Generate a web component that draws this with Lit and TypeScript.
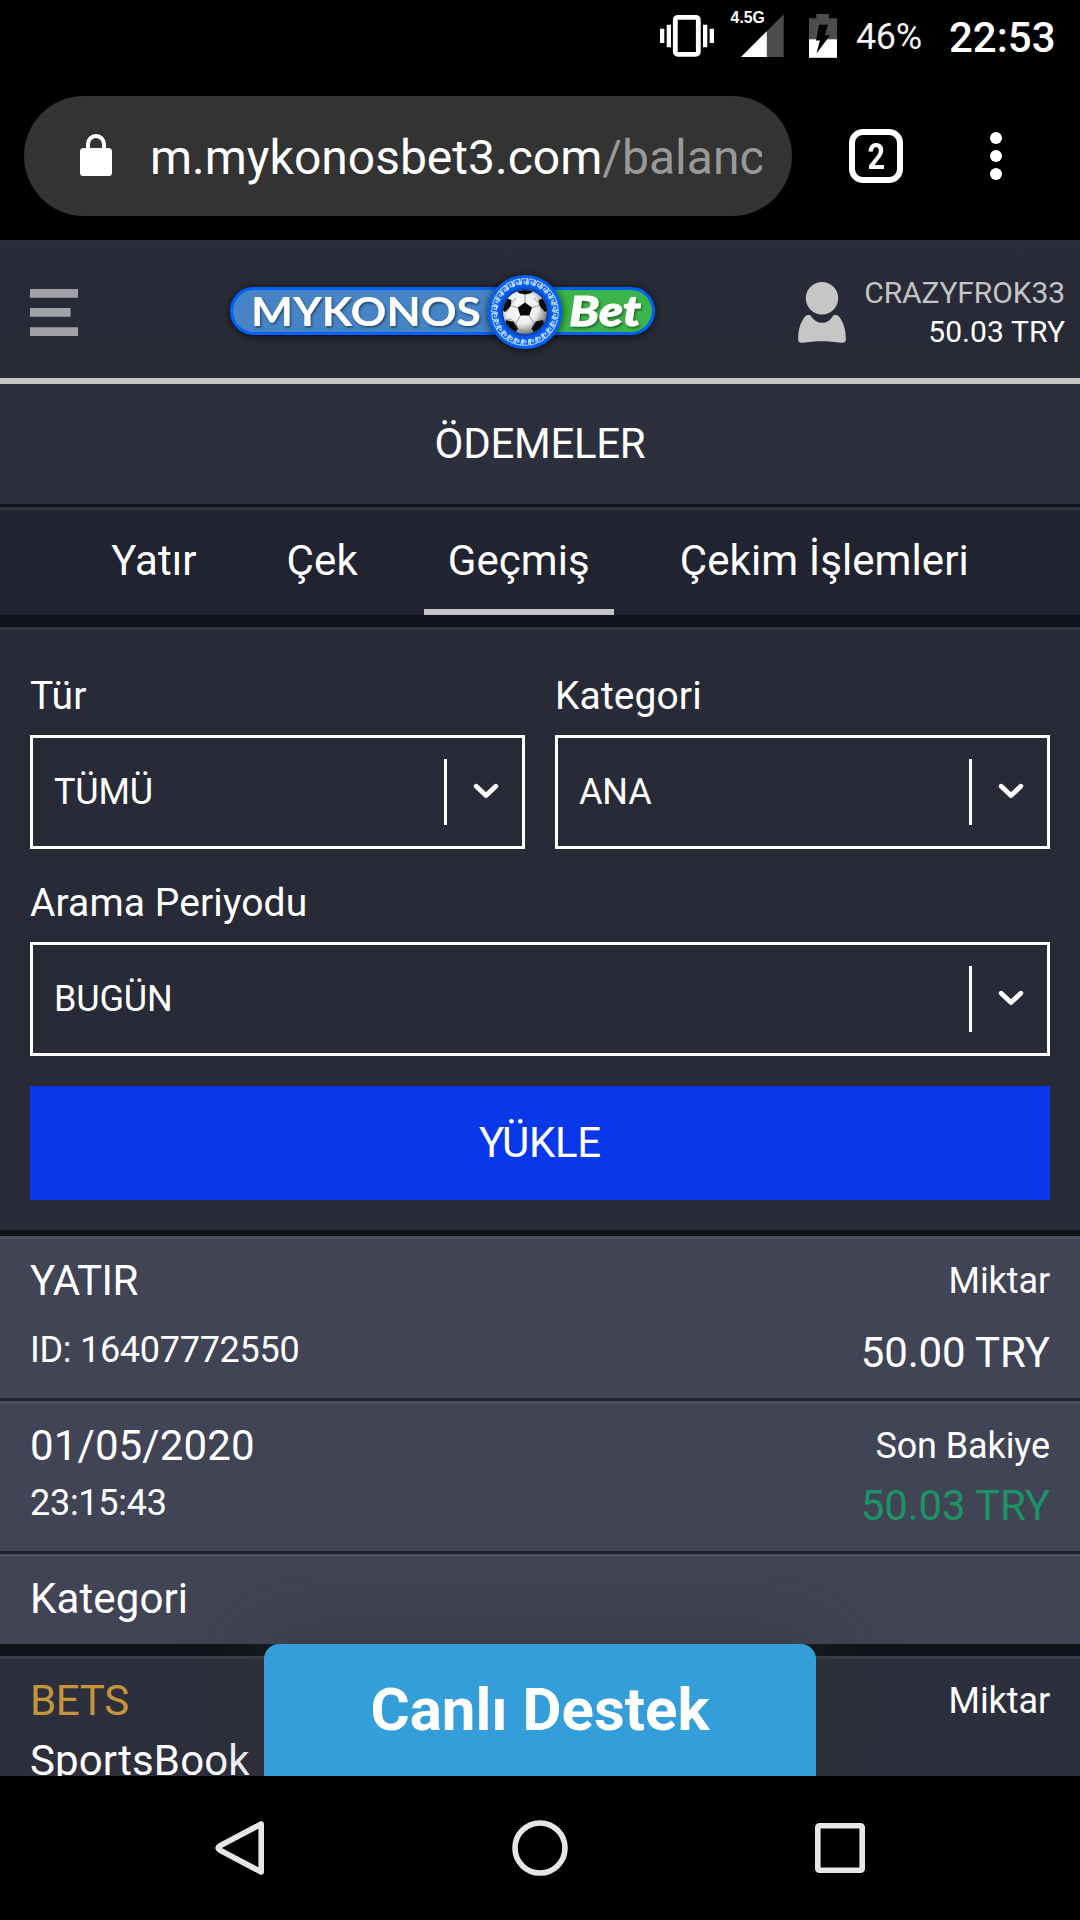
import { LitElement, html, svg, css, nothing } from "lit";
import { customElement, property } from "lit/decorators.js";

const FONT = css`Roboto, "Noto Sans", sans-serif`;

@customElement("status-bar")
class StatusBar extends LitElement {
  static styles = css`
    :host { display: flex; height: 72px; background: #000; color: #fff; justify-content: flex-end; align-items: center; }
    .icons { display: block; width: 197px; height: 72px; }
    .net { font-family: "Liberation Sans", sans-serif; font-weight: 700; font-size: 15.8px; }
    .battery { font-size: 36px; line-height: 75px; width: 93px; padding-top: 3px; letter-spacing: -0.4px; color: #f2f2f2; }
    .clock { font-size: 42px; font-weight: 500; line-height: 76px; width: 131px; padding-top: 4px; }
  `;
  render() {
    return html`
      <svg class="icons" viewBox="659 0 197 72">
        <rect x="675.3" y="17.3" width="23" height="37" rx="2.5" fill="none" stroke="#fff" stroke-width="4.8" />
        <path fill="#fff" d="M660 28.7h4.3v14.3H660zM666.7 24.7h4.3v22.6h-4.3zM703 24.7h4.3v22.6H703zM709.7 28.7h4.3v14.3h-4.3z" />
        <path fill="#4d4d4d" d="M783.7 14.2V57H741z" />
        <path fill="#fff" d="M766.8 31.2V57H741z" />
        <text class="net" x="730.6" y="22.7" fill="#fff">4.5G</text>
        <path fill="#4d4d4d" d="M816.3 14H829v4.3h8V40h-28V18.3h7.3z" />
        <path fill="#fff" d="M809 39.3h28v18.5h-28z" />
        <path fill="#000" d="M819 24.7h9l-3.3 10.6h5.3L816.5 53.4l3.4-12.8H816z" />
      </svg>
      <span class="battery">46%</span>
      <span class="clock">22:53</span>
    `;
  }
}

@customElement("browser-bar")
class BrowserBar extends LitElement {
  static styles = css`
    :host { display: flex; height: 168px; background: #000; box-sizing: border-box; padding: 24px 0 24px 24px; align-items: center; }
    .pill { display: flex; align-items: center; width: 768px; height: 120px; border-radius: 60px; background: #333; box-sizing: border-box; padding: 0 30px 0 56px; }
    .lock { flex: none; width: 32px; height: 42px; margin-right: 38px; margin-bottom: 2px; }
    .url { flex: 1; overflow: hidden; white-space: nowrap; color: #fff; font-size: 48px; line-height: 118px; padding-top: 4px; }
    .path { color: #999; }
    .tabs { box-sizing: border-box; width: 54px; height: 54px; margin-left: 57px; border: 6px solid #fff; border-radius: 14px; color: #fff; display: flex; align-items: center; justify-content: center; font-size: 36px; font-weight: 700; }
    .count { display: block; transform: scaleX(0.85); line-height: 42px; padding-top: 1px; }
    .menu { width: 12px; height: 48px; margin-left: 87px; }
  `;
  render() {
    return html`
      <div class="pill">
        <svg class="lock" viewBox="0 0 32 42">
          <rect y="14" width="32" height="28" rx="3.6" fill="#fff" />
          <path d="M8 16v-6a8 8 0 0 1 16 0v6" fill="none" stroke="#fff" stroke-width="4" />
        </svg>
        <div class="url">m.mykonosbet3.com<span class="path">/balance</span></div>
      </div>
      <div class="tabs"><span class="count">2</span></div>
      <svg class="menu" viewBox="0 0 12 48" fill="#fff"><circle cx="6" cy="6" r="6" /><circle cx="6" cy="24" r="6" /><circle cx="6" cy="42" r="6" /></svg>
    `;
  }
}

@customElement("brand-logo")
class BrandLogo extends LitElement {
  static styles = css`
    :host { display: block; width: 470px; height: 120px; }
    .art { display: block; width: 470px; height: 120px; }
    .name { font-family: Lato, sans-serif; font-weight: 700; font-size: 40.5px; }
    .bet { font-family: Lato, "Noto Sans", sans-serif; font-weight: 900; font-style: italic; font-size: 41px; }
  `;
  render() {
    const keys = Array.from({ length: 26 }, (_, i) => svg`
      <path transform=${`rotate(${(i * 360) / 26} 315 62)`} d="M311.4 34.4V28.8H317.6V33.2H313.8V31.2H315.6M311.4 34.6H309.4V28.8" />`);
    return html`
      <svg class="art" viewBox="0 0 470 120">
        <defs>
          <filter id="glow" x="-30%" y="-50%" width="160%" height="200%"><feDropShadow dx="0" dy="1" stdDeviation="4" flood-color="#000" flood-opacity="0.75" /></filter>
          <filter id="lift" x="-10%" y="-20%" width="120%" height="150%"><feDropShadow dx="1.2" dy="1.6" stdDeviation="0.9" flood-color="#000" flood-opacity="0.5" /></filter>
          <radialGradient id="ball" cx="0.42" cy="0.4" r="0.62"><stop offset="0" stop-color="#fff" /><stop offset="0.6" stop-color="#ededed" /><stop offset="1" stop-color="#777" /></radialGradient>
          <radialGradient id="well"><stop offset="0.72" stop-color="#002a7a" /><stop offset="1" stop-color="#0a5be8" /></radialGradient>
          <clipPath id="ballClip"><circle cx="315" cy="62" r="22" /></clipPath>
        </defs>
        <rect x="20" y="37" width="425" height="48" rx="24" fill="#0561fb" filter="url(#glow)" />
        <path d="M44 40H315V82H44A21 21 0 0 1 44 40z" fill="#4684c6" />
        <path d="M315 40H421A21 21 0 0 1 421 82H315z" fill="#3bb44b" />
        <text class="name" x="41" y="76" fill="#fff" textLength="230" lengthAdjust="spacingAndGlyphs" filter="url(#lift)">MYKONOS</text>
        <text class="bet" x="359" y="76" fill="#fff" stroke="#fff" stroke-width="0.8" textLength="72" lengthAdjust="spacingAndGlyphs" filter="url(#lift)">Bet</text>
        <circle cx="315" cy="62" r="37" fill="#0561fb" filter="url(#glow)" />
        <g fill="none" stroke="#cfe0ff" stroke-width="0.95">${keys}</g>
        <circle cx="315" cy="62" r="26" fill="url(#well)" />
        <circle cx="315" cy="62" r="22" fill="url(#ball)" />
        <g clip-path="url(#ballClip)">
          <path fill="none" stroke="#8f8f8f" stroke-width="0.9" d="M315 53V44M321.6 58L330 55M319 65.5L324 73M310.5 65.5L306 73M308 58L300 55M306 48L300 55L297 62M324 48L330 55L333 62M306 73L300 69L296 70M306 73L308 79L315 82L322 79L324 73L331 69L334 70" />
          <path fill="#0b0b0b" d="M315 52.5L322 57.6L319.4 65.5H310.2L307.8 57.6zM306 40L324 40L321 43.2L315 44.6L309 43.2zM334 48L328.5 50L330 56.5L335 62L339 60zM333 70L326 71.5L321.5 78.5L325 84L336 80zM296 70L303.5 71.8L308 78.5L305 84L293 80zM296 48L301.5 50L300.5 56.5L295 62L291 60z" />
        </g>
      </svg>`;
  }
}

@customElement("site-header")
class SiteHeader extends LitElement {
  static styles = css`
    :host { display: flex; box-sizing: border-box; height: 144px; padding: 0 15px 0 30px; border-bottom: 6px solid #c6c6c5; background: linear-gradient(#292b38, #272b36); align-items: center; }
    .burger { width: 48px; height: 47px; flex: none; margin-top: 7px; }
    .logo { margin: -1px 0 0 132px; padding-top: 2px; }
    .user { width: 48px; height: 61px; margin: 7px 0 0 118px; flex: none; }
    .account { margin-left: auto; padding-top: 6px; text-align: right; font-size: 30px; line-height: 39px; white-space: nowrap; color: #fff; letter-spacing: 0.1px; }
    .name { color: #c4c4c4; letter-spacing: -0.1px; }
  `;
  render() {
    return html`
      <svg class="burger" viewBox="0 0 48 47" fill="#a1a1a8"><path d="M0 0h48v8.7H0zM0 19h40.6v8.7H0zM0 38.3h48V47H0z" /></svg>
      <brand-logo class="logo"></brand-logo>
      <svg class="user" viewBox="0 0 48 61" fill="#c6c6c6">
        <circle cx="24" cy="16.2" r="16.2" />
        <path d="M7 34.6C8.5 32.6 12 32.4 13.4 34.4C18.5 43 29.5 43 34.6 34.4C36 32.4 39.5 32.6 41 34.6C45.5 40.5 48 48 47.8 57.5C47.7 60.4 46 61 43.5 60.7C30 58.6 18 58.6 4.5 60.7C2 61 .3 60.4 .2 57.5C0 48 2.500 40.5 7 34.6z" />
      </svg>
      <div class="account"><div class="name">CRAZYFROK33</div><div>50.03 TRY</div></div>
    `;
  }
}

@customElement("select-field")
class SelectField extends LitElement {
  @property() label = "";
  @property() value = "";
  static styles = css`
    :host { display: block; flex: 1; }
    .label { font-size: 39px; line-height: 60px; margin-bottom: 9px; letter-spacing: 0.1px; }
    .box { display: flex; align-items: center; box-sizing: border-box; height: 114px; border: 3px solid #fff; padding: 0 23px 0 21px; font-size: 36px; letter-spacing: -0.15px; }
    .value { flex: 1; }
    .sep { width: 3px; height: 66px; background: #fff; }
    .chevron { width: 26px; height: 16px; margin: 0 0 2px 26px; }
  `;
  render() {
    return html`
      <div class="label">${this.label}</div>
      <div class="box">
        <span class="value">${this.value}</span><span class="sep"></span>
        <svg class="chevron" viewBox="0 0 26 16"><path d="M3.200 3.200L13 12.600L22.800 3.200" fill="none" stroke="#fff" stroke-width="4.800" stroke-linecap="round" stroke-linejoin="round" /></svg>
      </div>`;
  }
}

interface Row { left: string; leftSub?: string; right?: string; rightSub?: string; kind: string; }

const ROWS: Row[] = [
  { left: "YATIR", leftSub: "ID: 16407772550", right: "Miktar", rightSub: "50.00 TRY", kind: "deposit" },
  { left: "01/05/2020", leftSub: "23:15:43", right: "Son Bakiye", rightSub: "50.03 TRY", kind: "balance" },
  { left: "Kategori", kind: "category" },
  { left: "BETS", leftSub: "SportsBook", right: "Miktar", kind: "bets" },
];

@customElement("app-root")
class AppRoot extends LitElement {
  static styles = css`
    :host { display: flex; flex-direction: column; width: 1080px; height: 1920px; overflow: hidden; background: #000; color: #fff; font-family: ${FONT}; }
    .page { position: relative; height: 1536px; overflow: hidden; background: #282b37; }
    .title { height: 120px; line-height: 120px; text-align: center; font-size: 42px; background: #2d303c; border-bottom: 3px solid #10141a; letter-spacing: -0.3px; }
    .tabs { display: flex; justify-content: center; gap: 42px; box-sizing: border-box; height: 108px; background: #212430; border-top: 3px solid #2e323c; }
    .tab { box-sizing: border-box; height: 105px; padding: 0 24px; font-size: 42px; line-height: 101px; letter-spacing: 0.08px; border-bottom: 6px solid transparent; }
    .active { border-color: #c5c5c5; }
    .form { border-top: 12px solid #10141a; background: #282b37; }
    .inner { display: flex; flex-direction: column; gap: 24px; border-top: 3px solid #323540; padding: 36px 30px 30px; }
    .pair { display: flex; gap: 30px; }
    .submit { height: 114px; line-height: 114px; margin-top: 6px; text-align: center; font-size: 42px; background: #0938ea; letter-spacing: -0.3px; }
    .row { display: flex; justify-content: space-between; box-sizing: border-box; padding: 21px 30px 0; border-top: 3px solid #4c5060; border-bottom: 3px solid #1f2230; background: #404454; line-height: 42px; font-size: 42px; letter-spacing: 0.12px; }
    .col { display: flex; flex-direction: column; }
    .end { text-align: right; }
    .small { font-size: 36px; letter-spacing: -0.28px; }
    .end .small { letter-spacing: -0.1px; }
    .end .amount { letter-spacing: -0.1px; }
    .deposit { height: 165px; }
    .deposit .col { gap: 27px; }
    .deposit .end { gap: 30px; }
    .deposit .lead { letter-spacing: -0.5px; }
    .balance { height: 153px; }
    .balance .col { gap: 15px; }
    .balance .end { gap: 18px; }
    .balance .amount { color: #1c9266; }
    .category { height: 90px; border-bottom: 0; }
    .bets { height: 140px; border-top-color: #393d48; border-bottom: 0; background: #2d303c; }
    .bets .col { gap: 18px; }
    .bets .lead { color: #c4953b; letter-spacing: -0.3px; }
    .list { border-top: 6px solid #10141a; }
    .break { height: 12px; background: #10141a; }
    .support { position: absolute; left: 264px; bottom: 0; width: 552px; height: 132px; line-height: 131px; text-align: center; font-size: 60px; font-weight: 700; background: #339ed9; border-radius: 15px 15px 0 0; box-shadow: 0 0 75px rgba(50, 50, 50, 0.6); }
    .nav { height: 144px; background: #000; display: flex; justify-content: center; align-items: center; gap: 244px; }
    .key { width: 56px; height: 56px; fill: none; stroke: #e6e6e6; stroke-width: 5.600; }
  `;

  private row(r: Row) {
    const smallLeft = r.kind !== "bets";
    return html`
      ${r.kind === "bets" ? html`<div class="break"></div>` : nothing}
      <div class="row ${r.kind}">
        <div class="col">
          <span class="lead">${r.left}</span>
          ${r.leftSub ? html`<span class=${smallLeft ? "small" : "sub"}>${r.leftSub}</span>` : nothing}
        </div>
        <div class="col end">
          ${r.right ? html`<span class="small">${r.right}</span>` : nothing}
          ${r.rightSub ? html`<span class="amount">${r.rightSub}</span>` : nothing}
        </div>
      </div>`;
  }

  render() {
    return html`
      <status-bar></status-bar>
      <browser-bar></browser-bar>
      <div class="page">
        <site-header></site-header>
        <div class="title">ÖDEMELER</div>
        <div class="tabs">
          ${["Yatır", "Çek", "Geçmiş", "Çekim İşlemleri"].map((t) => html`<div class="tab ${t === "Geçmiş" ? "active" : ""}">${t}</div>`)}
        </div>
        <div class="form">
          <div class="inner">
            <div class="pair">
              <select-field label="Tür" value="TÜMÜ"></select-field>
              <select-field label="Kategori" value="ANA"></select-field>
            </div>
            <select-field label="Arama Periyodu" value="BUGÜN"></select-field>
            <div class="submit">YÜKLE</div>
          </div>
        </div>
        <div class="list">${ROWS.map((r) => this.row(r))}</div>
        <div class="support">Canlı Destek</div>
      </div>
      <div class="nav">
        <svg class="key" viewBox="0 0 56 56"><path d="M49.200 4V52L7.600 30Q4.600 28 7.600 26z" stroke-linejoin="round" /></svg>
        <svg class="key" viewBox="0 0 56 56"><circle cx="28" cy="28" r="25" /></svg>
        <svg class="key" viewBox="0 0 56 56"><rect x="5.800" y="5.800" width="44.400" height="44.400" rx="1.500" /></svg>
      </div>
    `;
  }
}
